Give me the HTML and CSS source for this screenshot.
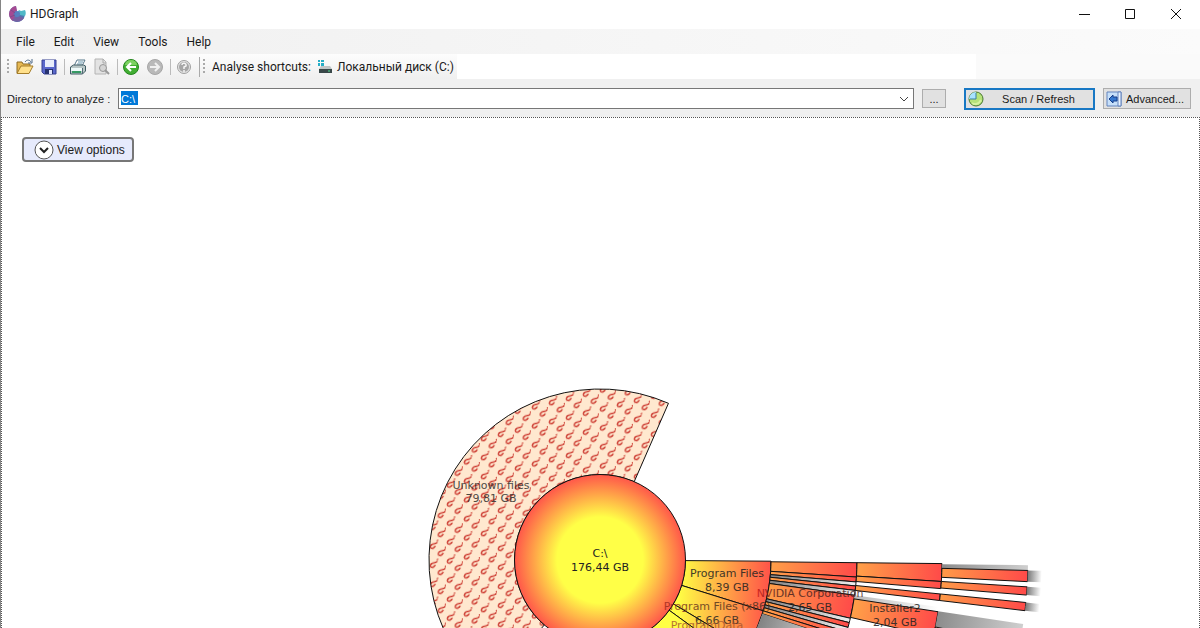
FILE: index.html
```html
<!DOCTYPE html>
<html lang="en">
<head>
<meta charset="utf-8">
<title>HDGraph</title>
<link rel="stylesheet" href="styles.css">
</head>
<body>
<div class="window">
  <header class="titlebar">
    <svg class="logo" viewBox="0 0 18 18" width="18" height="18" aria-hidden="true">
      <path d="M8 1A8 8 0 1 0 17 10L9 9Z" fill="#4d78b0"/>
      <path d="M8 1A8 8 0 0 0 1 9c0 3 2 6 4 7l2-4c-2-2-2-5 2-6Z" fill="#a54a93"/>
      <path d="M4 15c4 3 10 2 12-2l-5-2c-2 2-3 1-4 1Z" fill="#7660a3"/>
      <path d="M11 5l2 1 4-1c1 2 1 4 0 6l-5-1-3-2Z" fill="#50b8c7"/>
      <circle cx="9" cy="9" r="3" fill="#587fc0"/>
      <path d="M3 5l4 3M2 12l5-2" stroke="#7d4c8c" fill="none"/>
    </svg>
    <span class="title">HDGraph</span>
    <div class="controls">
      <button class="control" aria-label="Minimize"><svg viewBox="0 0 12 12" width="12" height="12"><path d="M1 6.500h11"/></svg></button>
      <button class="control" aria-label="Maximize"><svg viewBox="0 0 12 12" width="12" height="12"><path d="M1.500 1.500h9v9h-9z"/></svg></button>
      <button class="control" aria-label="Close"><svg viewBox="0 0 12 12" width="12" height="12"><path d="M1 1l10 10M11 1L1 11"/></svg></button>
    </div>
  </header>
  <nav class="menu">
    <button class="menu-item">File</button>
    <button class="menu-item">Edit</button>
    <button class="menu-item">View</button>
    <button class="menu-item">Tools</button>
    <button class="menu-item">Help</button>
  </nav>
  <div class="toolbar">
    <div class="strip">
      <span class="grip"></span>
      <button class="tool" aria-label="Open"><svg viewBox="0 0 18 18" width="18" height="18">
        <path d="M1 15V4h5l1 2h7v3" fill="#e7b953" stroke="#8c6b25"/><path d="M1 15.500L5 8h12l-4 7.500Z" fill="#ffe08b" stroke="#a57d2a"/><path d="M9 4c2-3 5-2 6 0M16 1v4h-4" fill="none" stroke="#4f6b88"/></svg></button>
      <button class="tool" aria-label="Save"><svg viewBox="0 0 18 18" width="18" height="18">
        <path d="M2 2h14v14H4l-2-2Z" fill="#5a68cc" stroke="#343e91"/><path d="M5 2h9v7H5Z" fill="#e8edfa"/><path d="M5 11h8v5H5Z" fill="#27336f"/><path d="M9 12h3v4H9Z" fill="#dfe6ff"/></svg></button>
      <span class="divider"></span>
      <button class="tool" aria-label="Print"><svg viewBox="0 0 18 18" width="18" height="18">
        <path d="M5 8l3-6h8l-3 6" fill="#fff" stroke="#57788a"/><path d="M9 4h5M8 6h5" stroke="#6696ad"/><path d="M1.500 9l3-2h10l2 1v5l-3 3h-12Z" fill="#b9c7c7" stroke="#405c64"/><path d="M2 10h11v3H2Z" fill="#effafa"/><path d="M3 14h9" stroke="#369a64" stroke-width="2"/><path d="M13.500 10v6" stroke="#536c76"/></svg></button>
      <button class="tool" aria-label="Print preview"><svg viewBox="0 0 18 18" width="18" height="18">
        <path d="M2 1h8l3 3v12H2Z" fill="#e3e3e3" stroke="#b4b4b4"/><path d="M10 1v4h3" fill="none" stroke="#aaa"/><circle cx="10" cy="10" r="3.500" fill="#d4d4d4" stroke="#999"/><path d="M12 12l4 4" stroke="#999" stroke-width="2"/></svg></button>
      <span class="divider"></span>
      <button class="tool" aria-label="Back"><svg viewBox="0 0 18 18" width="18" height="18">
        <circle cx="9" cy="9" r="7.500" fill="#41ae32" stroke="#25861e"/><path d="M3 7a6 5 0 0 1 12 0Z" fill="#7bd160"/><path d="M14 9H5M9 5L5 9l4 4" stroke="#fff" stroke-width="2" fill="none"/></svg></button>
      <button class="tool" aria-label="Forward"><svg viewBox="0 0 18 18" width="18" height="18">
        <circle cx="9" cy="9" r="7.500" fill="#b9b9b9" stroke="#a6a6a6"/><path d="M4 9h9M9 5l4 4-4 4" stroke="#f0f0f0" stroke-width="2" fill="none"/></svg></button>
      <span class="divider"></span>
      <button class="tool" aria-label="Help contents"><svg viewBox="0 0 18 18" width="18" height="18">
        <circle cx="9" cy="9" r="6.500" fill="#e4e4e4" stroke="#a0a0a0"/><circle cx="9" cy="9" r="5" fill="#a6a6a6"/><path d="M7 7c0-3 5-2 4 1L9 9v2M9 12v2" stroke="#f5f5f5" stroke-width="1.500" fill="none"/></svg></button>
      <span class="strip-end"></span>
      <span class="grip"></span>
      <span class="shortcut-label">Analyse shortcuts:</span>
      <button class="shortcut"><svg viewBox="0 0 16 16" width="16" height="16" aria-hidden="true">
        <path d="M1 1h2v2H1zM4 1h3v2H4zM1 4h2v3H1zM4 4h3v3H4z" fill="#25aec7"/><path d="M2 10l2-3h9l2 3Z" fill="#bfc5c7"/><path d="M2 10h13v4H2Z" fill="#394849"/><path d="M11 12h2" stroke="#54e291"/></svg>Локальный диск (C:)</button>
    </div>
    <div class="blank"></div>
  </div>
  <div class="address">
    <label for="directory">Directory to analyze :</label>
    <div class="combo">
      <input id="directory" class="path" type="text" value="C:\">
      <button class="drop" aria-label="Show recent directories"><svg viewBox="0 0 10 6" width="10" height="6"><path d="M1 1l4 4 4-4" fill="none" stroke="#444"/></svg></button>
    </div>
    <button class="push browse">...</button>
    <button class="push scan"><svg viewBox="0 0 16 16" width="16" height="16" aria-hidden="true">
      <circle cx="8" cy="8" r="7" fill="#b5e379" stroke="#477630"/><path d="M8 8V1A7 7 0 0 0 1 8Z" fill="#a8e2ff"/><path d="M8 2v6H2" fill="none" stroke="#397f9e"/><path d="M4 12c3 2 7 1 9-3" fill="none" stroke="#d5f2a0" stroke-width="2"/></svg><span>Scan / Refresh</span></button>
    <button class="push advanced"><svg viewBox="0 0 16 16" width="16" height="16" aria-hidden="true">
      <path d="M1 1h14v14H1Z" fill="#c7e0fa" stroke="#6283bd"/><path d="M12 1h3v14h-3Z" fill="#e8f2ff" stroke="#6283bd"/><path d="M3 8l4-4v2h4v4H7v2Z" fill="#3679d0" stroke="#163f8b"/></svg><span>Advanced...</span></button>
  </div>
  <main class="stage">
    <button class="options"><svg viewBox="0 0 20 20" width="20" height="20" aria-hidden="true"><circle cx="10" cy="10" r="9" fill="#fff" stroke="#555"/><path d="M6 8l4 4 4-4" fill="none" stroke="#222" stroke-width="2"/></svg>View options</button>
    <svg class="chart" viewBox="-449 -180 900 248" role="img" aria-label="Disk usage of C:\">
      <defs>
        <radialGradient id="core" gradientUnits="userSpaceOnUse" cx="0" cy="0" r="86"><stop offset="0.500" stop-color="#ffff47"/><stop offset="0.750" stop-color="#ffaa48"/><stop offset="1" stop-color="#ff554a"/></radialGradient>
        <linearGradient id="ring1" gradientUnits="userSpaceOnUse" x1="70" y1="24" x2="174" y2="30"><stop offset="0.080" stop-color="#ffff44"/><stop offset="1" stop-color="#ff4a49"/></linearGradient>
        <radialGradient id="ring2" gradientUnits="userSpaceOnUse" cx="0" cy="0" r="257"><stop offset="0.670" stop-color="#ff9e48"/><stop offset="1" stop-color="#ff4a49"/></radialGradient>
        <radialGradient id="ring3" gradientUnits="userSpaceOnUse" cx="0" cy="0" r="342"><stop offset="0.760" stop-color="#ff9e48"/><stop offset="1" stop-color="#ff4a49"/></radialGradient>
        <radialGradient id="ring4" gradientUnits="userSpaceOnUse" cx="0" cy="0" r="428"><stop offset="0.800" stop-color="#ff9a48"/><stop offset="1" stop-color="#ff4a49"/></radialGradient>
        <radialGradient id="files2" gradientUnits="userSpaceOnUse" cx="0" cy="0" r="257"><stop offset="0.670" stop-color="#848484"/><stop offset="1" stop-color="#f0f0f0"/></radialGradient>
        <radialGradient id="files3" gradientUnits="userSpaceOnUse" cx="0" cy="0" r="342"><stop offset="0.760" stop-color="#bbb"/><stop offset="1" stop-color="#fff"/></radialGradient>
        <radialGradient id="files4" gradientUnits="userSpaceOnUse" cx="0" cy="0" r="428"><stop offset="0.800" stop-color="#8c8c8c"/><stop offset="1" stop-color="#cfcfcf"/></radialGradient>
        <radialGradient id="files5" gradientUnits="userSpaceOnUse" cx="0" cy="0" r="442"><stop offset="0.968" stop-color="#777"/><stop offset="1" stop-color="#fff"/></radialGradient>
        <linearGradient id="fadeWide" gradientUnits="userSpaceOnUse" x1="62" y1="0" x2="110" y2="0"><stop offset="0" stop-color="#a3281c"/><stop offset="1" stop-color="#4c2e1c"/></linearGradient>
        <linearGradient id="fadeNvidia" gradientUnits="userSpaceOnUse" x1="155" y1="0" x2="180" y2="0"><stop offset="0" stop-color="#d41919"/><stop offset="1" stop-color="#4b2020"/></linearGradient>
        <pattern id="unknown" patternUnits="userSpaceOnUse" width="17" height="19" x="-1" y="-6" patternTransform="skewY(-14)">
          <rect width="17" height="19" fill="#ffe8cf"/>
          <g fill="none" stroke="#cf4338" stroke-width="1.500" stroke-linecap="round">
            <path id="hook" transform="translate(1 1) skewY(14)" d="M7.500 0v.2M7 2C6 4 4 3 2 4C-.5 5.500 0 8 2 8C3.500 8 4.500 7 5 6"/>
            <path transform="translate(9 10) skewY(14)" d="M7.500 0v.2M7 2C6 4 4 3 2 4C-.5 5.500 0 8 2 8C3.500 8 4.500 7 5 6"/>
            <path transform="translate(9 -9) skewY(14)" d="M7.500 0v.2M7 2C6 4 4 3 2 4C-.5 5.500 0 8 2 8C3.500 8 4.500 7 5 6"/>
          </g>
        </pattern>
      </defs>
      <g id="segments"></g>
      <circle r="85.500" fill="url(#core)" stroke="#111"/>
      <g class="labels">
        <text x="0" y="-3">C:\</text><text x="0" y="11">176,44 GB</text>
        <g opacity="0.800"><text x="-109" y="-71">Unknown files</text><text x="-109" y="-58">79,81 GB</text></g>
        <g opacity="0.850"><text x="127" y="17">Program Files</text><text x="127" y="31">8,39 GB</text></g>
        <g opacity="0.800"><text x="117" y="50" fill="url(#fadeWide)">Program Files (x86)</text><text x="117" y="64">6,66 GB</text></g>
        <text x="107" y="69" fill="#a6522d" opacity="0.800">ProgramData</text>
        <g opacity="0.850"><text x="210" y="37" fill="url(#fadeNvidia)">NVIDIA Corporation</text><text x="210" y="51">2,65 GB</text></g>
        <g opacity="0.850"><text x="295" y="52">Installer2</text><text x="295" y="66">2,04 GB</text></g>
      </g>
    </svg>
  </main>
</div>
<script src="chart.js"></script>
</body>
</html>
```
FILE: styles.css
```css
* { box-sizing: border-box; }
body { margin: 0; background: #fff; color: #1a1a1a; font: 12px/16px Roboto, "Noto Sans", sans-serif; overflow: hidden; }
button { margin: 0; padding: 0; border: 0; background: none; color: inherit; font: inherit; }
svg { display: block; flex: none; }
.window { display: flex; flex-direction: column; min-height: 100vh; border-left: 1px solid #858585; }
.titlebar { display: flex; align-items: center; height: 29px; padding: 0 1px 2px 7px; gap: 4px; }
.controls { display: flex; margin-left: auto; }
.control { width: 46px; height: 26px; display: grid; place-items: center; }
.control svg { fill: none; stroke: #111; }
.menu { display: flex; height: 25px; padding-left: 5px; background: linear-gradient(90deg, #f0f0f0, #fbfbfb); }
.menu-item { padding: 0 9px 0 10px; }
.toolbar { display: flex; height: 25px; background: #fafafa; }
.strip { display: flex; flex: none; align-items: center; width: 456px; padding-left: 6px; background: linear-gradient(#fdfdfd, #efefef); }
.blank { flex: 0 1 519px; background: #fff; }
.grip { width: 2px; height: 15px; margin-right: 7px; background: repeating-linear-gradient(#aaa 0 2px, transparent 2px 4px); }
.tool { width: 24px; height: 22px; display: flex; align-items: center; }
.divider { width: 1px; height: 16px; margin: 0 4px 0 0; background: #bbb; }
.strip-end { width: 1px; height: 20px; margin: 0 3px 0 0; background: #aaa; }
.shortcut-label { white-space: nowrap; }
.shortcut { display: flex; align-items: center; gap: 4px; margin-left: 6px; white-space: nowrap; }
.address { display: flex; align-items: center; height: 38px; padding: 1px 9px 0 6px; background: #f0f0f0; font: 11px/14px "Liberation Sans", Arial, sans-serif; }
.address label { width: 111px; flex: none; white-space: nowrap; }
.combo { display: flex; flex: 1; height: 21px; border: 1px solid #777; background: #fff; }
.path { flex: 1; min-width: 0; border: 0; outline: 0; padding: 0 2px; color: #fff; font: inherit; background: linear-gradient(#0078d7, #0078d7) 2px 2px / 17px 14px no-repeat; }
.drop { width: 18px; display: grid; place-items: center; }
.push { display: flex; align-items: center; height: 21px; border: 1px solid #adadad; background: #e1e1e1; }
.browse { width: 24px; height: 19px; margin: 0 18px 0 8px; justify-content: center; }
.scan { width: 131px; height: 22px; margin-right: 8px; padding-left: 2px; border: 2px solid #1878c4; }
.scan span { flex: 1; text-align: center; }
.advanced { width: 88px; padding-left: 2px; gap: 4px; }
.stage { display: flex; flex: 1; flex-direction: column; justify-content: space-between; border: 1px dotted #555; border-bottom: 0; }
.options { display: flex; align-items: center; gap: 3px; width: 112px; height: 25px; margin: 19px 0 0 20px; padding-left: 10px; border: 2px solid #777; border-radius: 4px; background: #e6eafc; font: 12px/16px "Liberation Sans", Arial, sans-serif; }
.chart { width: 900px; height: 248px; align-self: center; }
.labels { font-family: "DejaVu Sans", sans-serif; font-size: 11px; text-anchor: middle; fill: #222; }
```
FILE: chart.js
```js
// Each entry: inner radius, outer radius, start angle, end angle, fill, outlined.
const segments = [
  [85.5, 171, 130.6, 293.6, "unknown", true],
  [85.5, 171, 0.4, 17.3, "ring1", true],
  [85.5, 171, 17.3, 30.9, "ring1", true],
  [85.5, 171, 30.9, 36, "ring1", true],
  [85.5, 171, 36, 60, "ring1", true],
  [171, 257, 0.6, 3.8, "ring2", true],
  [171, 257, 3.8, 4.9, "ring2", true],
  [171, 257, 4.9, 5.8, "files2", true],
  [171, 257, 5.8, 6.8, "ring2", true],
  [171, 257, 6.8, 7.9, "files2", true],
  [171, 257, 7.9, 13.1, "ring2", true],
  [171, 257, 13.1, 14.1, "files2", true],
  [171, 257, 14.1, 15.2, "ring2", true],
  [171, 257, 15.2, 16.2, "files2", true],
  [171, 257, 16.2, 17.3, "ring2", true],
  [171, 257, 17.3, 18.3, "ring2", true],
  [171, 257, 18.3, 31, "files2", false],
  [257, 342, 0.6, 3.6, "ring3", true],
  [257, 342, 3.6, 4.8, "ring3", true],
  [257, 342, 5.7, 6.8, "ring3", true],
  [257, 342, 7.9, 8.7, "files3", false],
  [257, 342, 8.7, 12.9, "ring3", true],
  [342, 428, 0.7, 1.4, "files4", false],
  [342, 428, 1.4, 2.9, "ring4", true],
  [342, 428, 3.6, 4.7, "ring4", true],
  [342, 428, 5.7, 6.8, "ring4", true],
  [342, 428, 8.6, 11.3, "files4", false],
  [342, 428, 11.3, 12.3, "ring4", true],
  [428, 442, 1.4, 2.9, "files5", false],
  [428, 442, 3.6, 4.7, "files5", false],
  [428, 442, 5.7, 6.8, "files5", false]
];

function point(radius, degrees) {
  const a = degrees * Math.PI / 180;
  return (radius * Math.cos(a)).toFixed(2) + " " + (radius * Math.sin(a)).toFixed(2);
}

const group = document.getElementById("segments");
for (const [inner, outer, from, to, fill, outlined] of segments) {
  const path = document.createElementNS("http://www.w3.org/2000/svg", "path");
  path.setAttribute("d", `M${point(inner, from)}L${point(outer, from)}A${outer} ${outer} 0 0 1 ${point(outer, to)}L${point(inner, to)}A${inner} ${inner} 0 0 0 ${point(inner, from)}Z`);
  path.setAttribute("fill", `url(#${fill})`);
  if (outlined) path.setAttribute("stroke", "#111");
  group.appendChild(path);
}
```
